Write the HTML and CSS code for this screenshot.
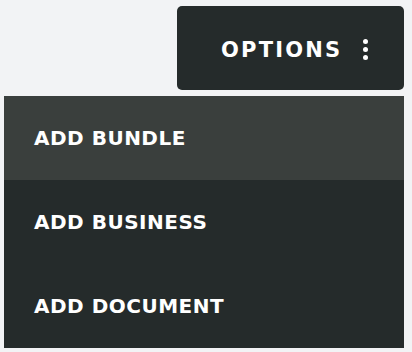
FILE: index.html
```html
<!DOCTYPE html>
<html lang="en">
<head>
    <meta charset="UTF-8">
    <meta name="viewport" content="width=device-width, initial-scale=1.0">
    <title>Options</title>
    <link rel="stylesheet" href="styles.css">
</head>
<body>
    <div class="page">
        <button class="options-button">
            <span class="options-label">OPTIONS</span>
            <span class="kebab">
                <i></i><i></i><i></i>
            </span>
        </button>

        <ul class="menu">
            <li class="menu-item active">ADD BUNDLE</li>
            <li class="menu-item">ADD BUSINESS</li>
            <li class="menu-item">ADD DOCUMENT</li>
        </ul>
    </div>
</body>
</html>
```

FILE: styles.css
```css
body {
    font-family: 'DejaVu Sans', 'Open Sans', sans-serif;
    margin: 0;
    padding: 0;
    background-color: #f2f3f5;
    color: #fff;
}
.page {
    display: flex;
    flex-direction: column;
    align-items: flex-end;
    padding: 6px 8px 0 4px;
}
.options-button {
    display: flex;
    align-items: center;
    width: 227px;
    height: 84px;
    padding: 0 0 0 44px;
    margin-bottom: 6px;
    border: none;
    border-radius: 5px;
    background-color: #252b2b;
    color: #fff;
    font-family: inherit;
    font-size: 21px;
    font-weight: 700;
    letter-spacing: 2.2px;
    cursor: pointer;
}
.options-label {
    padding-top: 3px;
}
.kebab {
    display: flex;
    flex-direction: column;
    gap: 3px;
    margin-left: auto;
    margin-right: 36px;
    padding-top: 2px;
}
.kebab i {
    display: block;
    width: 5px;
    height: 5px;
    border-radius: 50%;
    background-color: #fff;
}
.menu {
    list-style: none;
    margin: 0;
    padding: 0;
    width: 100%;
    background-color: #252b2b;
}
.menu-item {
    display: flex;
    align-items: center;
    height: 84px;
    padding: 0 0 0 30px;
    font-size: 20px;
    font-weight: 700;
    letter-spacing: 0.5px;
    box-sizing: border-box;
}
.menu-item.active {
    background-color: #3a3f3d;
}
```
